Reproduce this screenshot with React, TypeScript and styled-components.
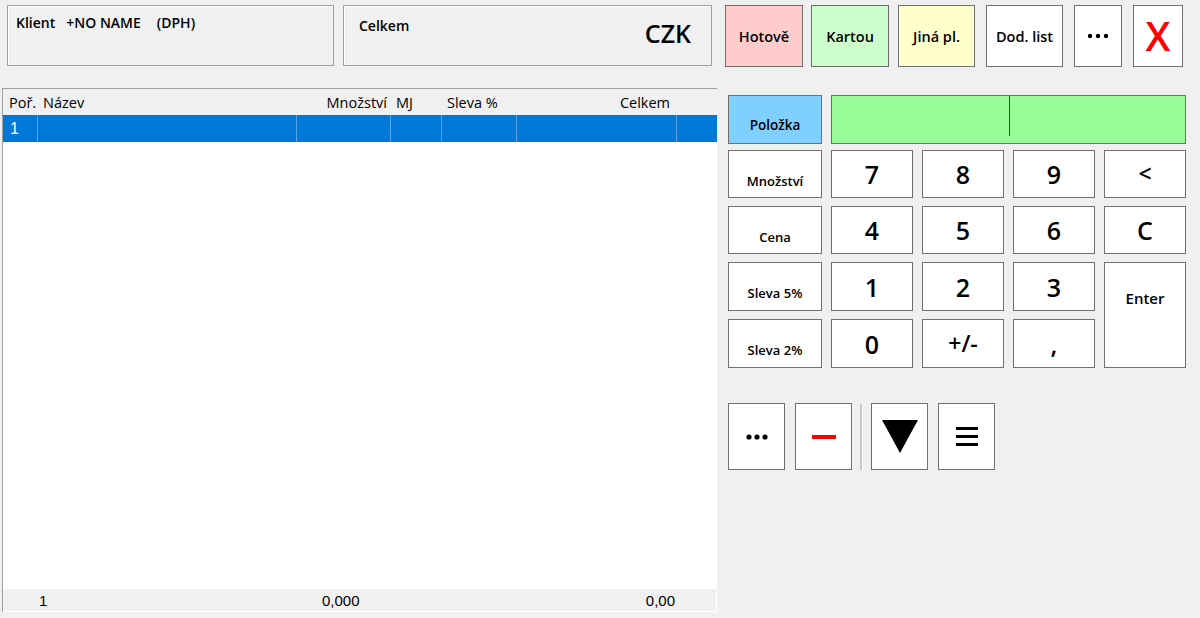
import React from "react";
import styled, { createGlobalStyle } from "styled-components";

const Global = createGlobalStyle`
  html, body { margin: 0; padding: 0; background: #f0f0f0; }
  body { font-family: "Open Sans", "Noto Sans", sans-serif; color: #000; }
  #root { width: 1200px; height: 618px; overflow: hidden; }
`;

const Page = styled.div`
  width: 1200px;
  height: 618px;
  background: #f0f0f0;
  padding-top: 5px;
  box-sizing: border-box;
`;

const TopBar = styled.div`
  display: flex;
  align-items: flex-start;
  padding-left: 7px;
  height: 62px;
`;

const InfoBox = styled.div<{ $w: number; $ml?: number }>`
  width: ${(p) => p.$w}px;
  height: 61px;
  margin-left: ${(p) => p.$ml ?? 0}px;
  box-sizing: border-box;
  border: 1px solid #a0a0a0;
  box-shadow: inset 1px 1px 0 #fff;
  display: flex;
  justify-content: space-between;
  align-items: flex-start;
`;

const InfoLabel = styled.div<{ $pl: number; $pt: number }>`
  display: flex;
  padding: ${(p) => p.$pt}px 0 0 ${(p) => p.$pl}px;
  font-size: 14px;
  font-weight: 600;
  white-space: pre;
`;

const InfoPart = styled.span<{ $ml: number }>`
  margin-left: ${(p) => p.$ml}px;
`;

const Currency = styled.div`
  font-size: 25px;
  font-weight: 600;
  padding: 10px 20px 0 0;
`;

const TopButton = styled.div<{ $bg: string; $w: number; $ml: number }>`
  width: ${(p) => p.$w}px;
  height: 62px;
  margin-left: ${(p) => p.$ml}px;
  box-sizing: border-box;
  background: ${(p) => p.$bg};
  border: 1px solid #707070;
  display: flex;
  align-items: center;
  justify-content: center;
  font-size: 14.5px;
  font-weight: 600;
`;

const BigX = styled.span`
  color: #ff0000;
  font-family: "Open Sans", sans-serif;
  font-size: 40px;
  font-weight: 600;
  line-height: 1;
`;

const Main = styled.div`
  display: flex;
  margin-top: 21px;
`;

const GridPanel = styled.div`
  margin-left: 2px;
  width: 715px;
  height: 524px;
  box-sizing: border-box;
  border-top: 1px solid #a0a0a0;
  border-left: 1px solid #a0a0a0;
  background: #fff;
  display: flex;
  flex-direction: column;
`;

const COLS = "34px 259px 94px 51px 75px 160px 41px";

const HeaderRow = styled.div`
  display: grid;
  grid-template-columns: ${COLS};
  height: 26px;
  background: #f0f0f0;
  align-items: center;
  font-size: 14.5px;
`;

const HeadCell = styled.div<{ $align?: string; $pad?: number }>`
  text-align: ${(p) => p.$align ?? "left"};
  padding: ${(p) => (p.$align === "right" ? `0 ${p.$pad ?? 4}px 0 0` : `0 0 0 ${p.$pad ?? 6}px`)};
  white-space: nowrap;
`;

const DataRow = styled.div`
  display: grid;
  grid-template-columns: ${COLS};
  height: 27px;
  background: #0078d7;
  color: #fff;
`;

const DataCell = styled.div<{ $first?: boolean }>`
  border-left: ${(p) => (p.$first ? "none" : "1px solid #5aa3e6")};
  display: flex;
  align-items: center;
  padding-left: 7px;
  font-family: "Liberation Sans", Arial, sans-serif;
  font-size: 16px;
`;

const Body = styled.div`
  flex: 1;
`;

const FooterRow = styled.div`
  display: grid;
  grid-template-columns: ${COLS};
  height: 22px;
  background: #f0f0f0;
  align-items: center;
  font-family: "Liberation Sans", Arial, sans-serif;
  font-size: 15px;
  border-right: 1px solid #fff;
  border-bottom: 1px solid #fff;
`;

const FootCell = styled.div<{ $align?: string; $pad?: number }>`
  text-align: ${(p) => p.$align ?? "left"};
  padding: ${(p) => (p.$align === "right" ? `0 ${p.$pad ?? 0}px 0 0` : `0 0 0 ${p.$pad ?? 0}px`)};
  white-space: nowrap;
`;

const RightPanel = styled.div`
  margin-left: 11px;
  padding-top: 7px;
  display: flex;
  flex-direction: column;
`;

const TopRow = styled.div`
  display: flex;
  gap: 9px;
  height: 49px;
`;

const Key = styled.div<{ $bg?: string; $w?: number; $size?: number; $weight?: number; $pt?: number; $span?: number }>`
  width: ${(p) => (p.$w ? `${p.$w}px` : "auto")};
  box-sizing: border-box;
  background: ${(p) => p.$bg ?? "#fff"};
  border: 1px solid #707070;
  display: flex;
  justify-content: center;
  align-items: ${(p) => (p.$pt !== undefined ? "flex-start" : "center")};
  padding-top: ${(p) => p.$pt ?? 0}px;
  font-size: ${(p) => p.$size ?? 13}px;
  font-weight: ${(p) => p.$weight ?? 600};
  grid-row: ${(p) => (p.$span ? `span ${p.$span}` : "auto")};
  line-height: 1.2;
`;

const InputField = styled.div`
  width: 355px;
  box-sizing: border-box;
  background: #98fb98;
  border: 1px solid #707070;
  position: relative;
`;

const Caret = styled.div`
  position: absolute;
  left: 177px;
  top: 0;
  width: 1px;
  height: 40px;
  background: #444;
`;

const Keypad = styled.div`
  display: grid;
  grid-template-columns: 94px repeat(4, 82px);
  grid-template-rows: 48px 48px 49px 49px;
  column-gap: 9px;
  row-gap: 8px;
  margin-top: 6px;
`;

const ToolRow = styled.div`
  display: flex;
  align-items: stretch;
  margin-top: 35px;
  height: 67px;
`;

const ToolButton = styled.div<{ $w: number; $ml: number }>`
  width: ${(p) => p.$w}px;
  margin-left: ${(p) => p.$ml}px;
  box-sizing: border-box;
  background: #fff;
  border: 1px solid #707070;
  display: flex;
  align-items: center;
  justify-content: center;
`;

const Separator = styled.div`
  width: 2px;
  margin-left: 8px;
  background: #c8c8c8;
  border-right: 1px solid #fff;
  margin-top: 1px;
`;

const columns = [
  { label: "Poř.", align: "left", pad: 6 },
  { label: "Název", align: "left", pad: 6 },
  { label: "Množství", align: "right", pad: 3 },
  { label: "MJ", align: "left", pad: 6 },
  { label: "Sleva %", align: "left", pad: 6 },
  { label: "Celkem", align: "right", pad: 6 },
  { label: "", align: "left", pad: 0 },
];

function DotsIcon({ r = 2.6 }: { r?: number }) {
  return (
    <svg width="22" height="6" viewBox="0 0 22 6">
      <circle cx="3" cy="3" r={r} fill="#000" />
      <circle cx="11" cy="3" r={r} fill="#000" />
      <circle cx="19" cy="3" r={r} fill="#000" />
    </svg>
  );
}

const DIG = { $size: 25, $weight: 600 };

export default function App() {
  return (
    <>
      <Global />
      <Page>
        <TopBar>
          <InfoBox $w={327}>
            <InfoLabel $pl={8} $pt={7}>
              <InfoPart $ml={0}>Klient</InfoPart>
              <InfoPart $ml={11}>+NO NAME</InfoPart>
              <InfoPart $ml={16}>(DPH)</InfoPart>
            </InfoLabel>
          </InfoBox>
          <InfoBox $w={369} $ml={9}>
            <InfoLabel $pl={15} $pt={10}>Celkem</InfoLabel>
            <Currency>CZK</Currency>
          </InfoBox>
          <TopButton $bg="#ffcccc" $w={78} $ml={13}>Hotově</TopButton>
          <TopButton $bg="#ccffcc" $w={78} $ml={8}>Kartou</TopButton>
          <TopButton $bg="#ffffcc" $w={77} $ml={9}>Jiná pl.</TopButton>
          <TopButton $bg="#ffffff" $w={77} $ml={11}>Dod. list</TopButton>
          <TopButton $bg="#ffffff" $w={48} $ml={11}>
            <DotsIcon r={2.2} />
          </TopButton>
          <TopButton $bg="#ffffff" $w={50} $ml={11}>
            <BigX>X</BigX>
          </TopButton>
        </TopBar>
        <Main>
          <GridPanel>
            <HeaderRow>
              {columns.map((c, i) => (
                <HeadCell key={i} $align={c.align} $pad={c.pad}>
                  {c.label}
                </HeadCell>
              ))}
            </HeaderRow>
            <DataRow>
              <DataCell $first>1</DataCell>
              <DataCell />
              <DataCell />
              <DataCell />
              <DataCell />
              <DataCell />
              <DataCell />
            </DataRow>
            <Body />
            <FooterRow>
              <FootCell />
              <FootCell $pad={2}>1</FootCell>
              <FootCell $pad={26}>0,000</FootCell>
              <FootCell />
              <FootCell />
              <FootCell $align="right" $pad={1}>0,00</FootCell>
              <FootCell />
            </FooterRow>
          </GridPanel>
          <RightPanel>
            <TopRow>
              <Key $bg="#80d0ff" $w={94} $pt={21} $size={13.5}>Položka</Key>
              <InputField>
                <Caret />
              </InputField>
            </TopRow>
            <Keypad>
              <Key $pt={23}>Množství</Key>
              <Key {...DIG}>7</Key>
              <Key {...DIG}>8</Key>
              <Key {...DIG}>9</Key>
              <Key {...DIG} $size={23}>&lt;</Key>
              <Key $pt={23}>Cena</Key>
              <Key {...DIG}>4</Key>
              <Key {...DIG}>5</Key>
              <Key {...DIG}>6</Key>
              <Key {...DIG}>C</Key>
              <Key $pt={23}>Sleva 5%</Key>
              <Key {...DIG}>1</Key>
              <Key {...DIG}>2</Key>
              <Key {...DIG}>3</Key>
              <Key $span={2} $pt={26} $size={15}>Enter</Key>
              <Key $pt={23}>Sleva 2%</Key>
              <Key {...DIG}>0</Key>
              <Key {...DIG} $size={23}>+/-</Key>
              <Key {...DIG}>,</Key>
            </Keypad>
            <ToolRow>
              <ToolButton $w={57} $ml={0}>
                <DotsIcon />
              </ToolButton>
              <ToolButton $w={57} $ml={10}>
                <svg width="24" height="4" viewBox="0 0 24 4">
                  <rect x="0" y="0" width="24" height="4" fill="#ff0000" />
                </svg>
              </ToolButton>
              <Separator />
              <ToolButton $w={57} $ml={8}>
                <svg width="36" height="33" viewBox="0 0 36 33">
                  <polygon points="0,0 36,0 18,33" fill="#000" />
                </svg>
              </ToolButton>
              <ToolButton $w={57} $ml={10}>
                <svg width="22" height="22" viewBox="0 0 22 22">
                  <rect x="0" y="1" width="22" height="3" fill="#000" />
                  <rect x="0" y="9" width="22" height="3" fill="#000" />
                  <rect x="0" y="17" width="22" height="3" fill="#000" />
                </svg>
              </ToolButton>
            </ToolRow>
          </RightPanel>
        </Main>
      </Page>
    </>
  );
}
